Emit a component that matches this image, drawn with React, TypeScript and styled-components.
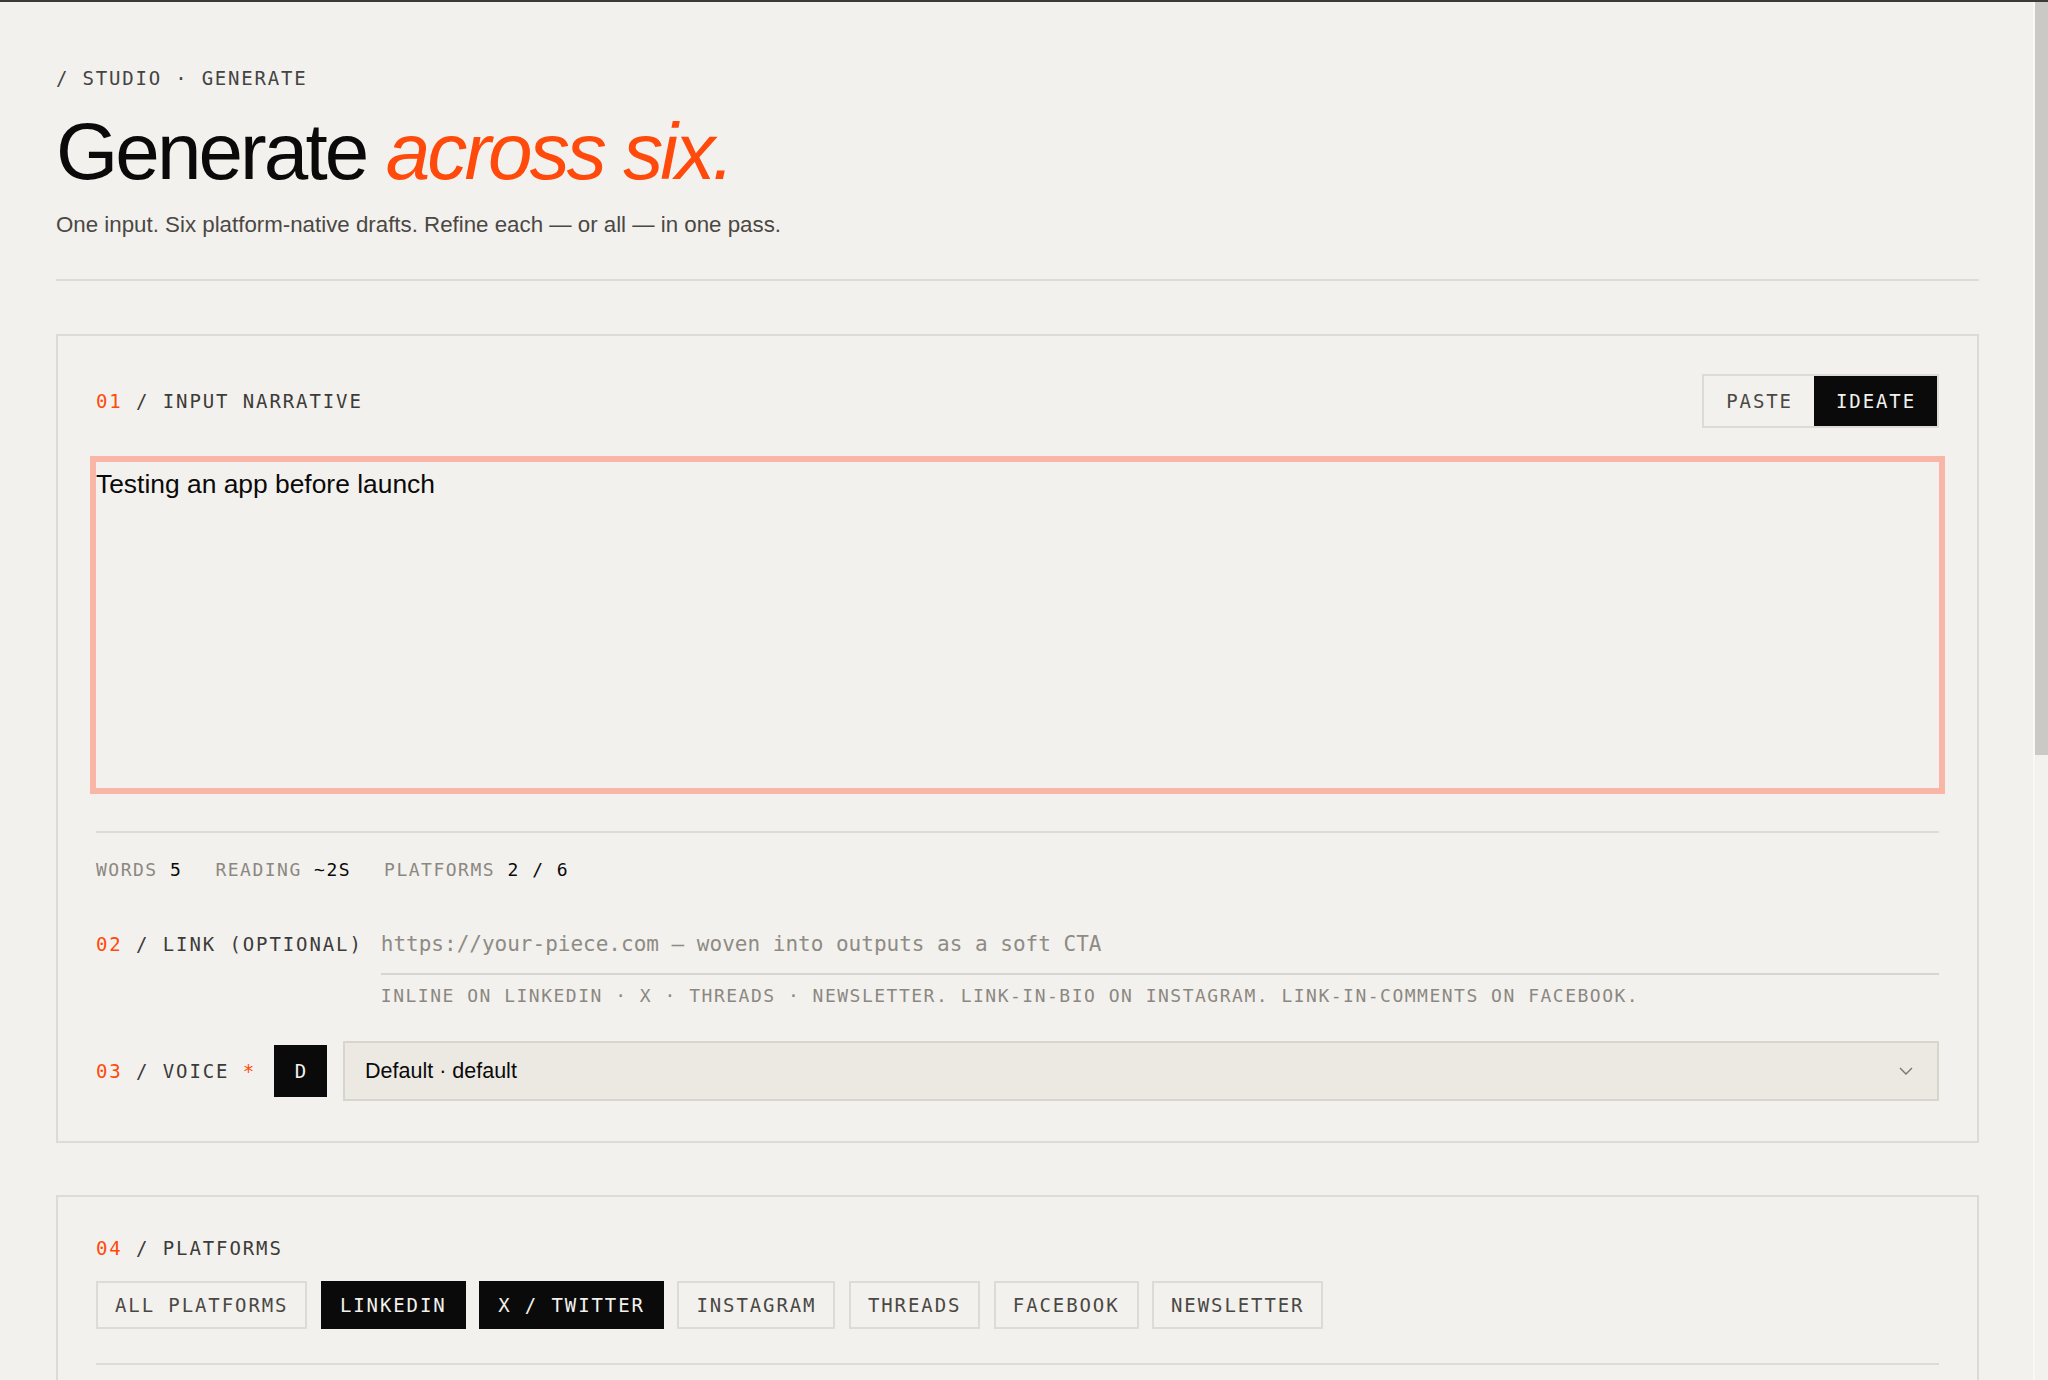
import React from "react";
import styled, { createGlobalStyle } from "styled-components";

const MONO = `"DejaVu Sans Mono", "Liberation Mono", monospace`;
const SANS = `"Liberation Sans", Arial, sans-serif`;
const ORANGE = "#ff4a0c";
const LINE = "#dedbd6";

const Global = createGlobalStyle`
  html, body { margin: 0; padding: 0; background: #f3f1ed; overflow: hidden; }
  body { border-top: 2px solid #3a3a3a; font-family: ${SANS}; color: #0a0a0a; }
  * { box-sizing: border-box; }
`;

const Shell = styled.div`
  display: flex;
  align-items: flex-start;
  height: calc(100vh - 2px);
`;

const Rail = styled.div`
  flex: 0 0 13px;
  width: 13px;
  align-self: stretch;
  box-shadow: -2px 0 0 #f9f8f5;
`;

const Thumb = styled.div`
  height: 753px;
  background: #cbc9c5;
`;

const Page = styled.main`
  flex: 1;
  min-width: 0;
  padding: 64px 56px 64px;
`;

const Crumb = styled.div`
  font-family: ${MONO};
  font-size: 19px;
  letter-spacing: 1.8px;
  line-height: 24px;
  color: #444;
  text-transform: uppercase;
`;

const Title = styled.h1`
  margin: 22px 0 0;
  font-family: ${SANS};
  font-weight: 400;
  font-size: 80px;
  line-height: 80px;
  letter-spacing: -2.9px;
  color: #0a0a0a;
`;

const Accent = styled.em`
  color: ${ORANGE};
  font-style: italic;
`;

const Lede = styled.p`
  margin: 18px 0 0;
  font-size: 22.3px;
  line-height: 30px;
  color: #4a4844;
`;

const Rule = styled.hr<{ $gap?: number }>`
  border: 0;
  height: 2px;
  background: ${LINE};
  margin: ${(p) => p.$gap ?? 0}px 0 0;
`;

const Card = styled.section<{ $top: number }>`
  margin-top: ${(p) => p.$top}px;
  border: 2px solid ${LINE};
  padding: 38px 38px 40px;
`;

const HeaderRow = styled.div`
  display: flex;
  align-items: center;
  justify-content: space-between;
  height: 54px;
`;

const Label = styled.div`
  font-family: ${MONO};
  font-size: 19px;
  letter-spacing: 1.9px;
  line-height: 26px;
  color: #3c3b39;
  text-transform: uppercase;
  white-space: nowrap;
`;

const Num = styled.span`
  color: ${ORANGE};
`;

const Segmented = styled.div`
  display: flex;
  border: 2px solid ${LINE};
  height: 54px;
`;

const SegButton = styled.button<{ $active?: boolean }>`
  font-family: ${MONO};
  font-size: 19px;
  letter-spacing: 1.9px;
  padding: 0 21px 0 22px;
  border: 0;
  background: ${(p) => (p.$active ? "#0a0a0a" : "transparent")};
  color: ${(p) => (p.$active ? "#f3f1ed" : "#4a4844")};
  text-transform: uppercase;
`;

const TextArea = styled.textarea`
  display: block;
  width: 100%;
  height: 326px;
  margin-top: 34px;
  padding: 3px 0 0;
  border: 0;
  background: transparent;
  outline: 6px solid #f9b5a5;
  resize: none;
  font-family: ${SANS};
  font-size: 26.4px;
  line-height: 38px;
  color: #0a0a0a;
`;

const Stats = styled.div`
  display: flex;
  gap: 33px;
  margin-top: 25px;
  font-family: ${MONO};
  font-size: 18px;
  letter-spacing: 1.5px;
  line-height: 24px;
  text-transform: uppercase;
`;

const Stat = styled.span`
  color: #8b8882;
  & > b {
    font-weight: 400;
    color: #0a0a0a;
  }
`;

const LinkRow = styled.div`
  display: grid;
  grid-template-columns: auto 1fr;
  column-gap: 18px;
  margin-top: 38px;
  align-items: start;
`;

const LinkLabel = styled(Label)`
  margin-top: 11px;
`;

const Field = styled.div`
  display: flex;
  flex-direction: column;
`;

const LinkInput = styled.input`
  height: 55px;
  padding: 0 0 6px;
  border: 0;
  border-bottom: 2px solid #d8d5d0;
  background: transparent;
  font-family: ${MONO};
  font-size: 21px;
  color: #0a0a0a;
  outline: none;
  &::placeholder {
    color: #8e8b85;
  }
`;

const Help = styled.div`
  margin-top: 9px;
  font-family: ${MONO};
  font-size: 18px;
  letter-spacing: 1.5px;
  line-height: 24px;
  color: #8b8882;
  text-transform: uppercase;
  white-space: nowrap;
`;

const VoiceRow = styled.div`
  display: flex;
  align-items: center;
  gap: 16px;
  margin-top: 33px;
  height: 60px;
`;

const Badge = styled.div`
  width: 53px;
  height: 52px;
  display: flex;
  align-items: center;
  justify-content: center;
  background: #0a0a0a;
  color: #f3f1ed;
  font-family: ${MONO};
  font-size: 19px;
  margin-left: 2px;
`;

const Select = styled.div`
  flex: 1;
  height: 60px;
  display: flex;
  align-items: center;
  justify-content: space-between;
  padding: 0 24px 0 20px;
  background: #ece9e3;
  border: 2px solid #d8d5cf;
  font-family: ${SANS};
  font-size: 21.5px;
  color: #0a0a0a;
`;

const Chips = styled.div`
  display: flex;
  gap: 13.5px;
  margin-top: 20px;
`;

const Chip = styled.button<{ $on?: boolean }>`
  height: 48px;
  padding: 0 17px;
  border: 2px solid ${(p) => (p.$on ? "#0a0a0a" : LINE)};
  background: ${(p) => (p.$on ? "#0a0a0a" : "transparent")};
  color: ${(p) => (p.$on ? "#f3f1ed" : "#4a4844")};
  font-family: ${MONO};
  font-size: 19px;
  letter-spacing: 1.9px;
  text-transform: uppercase;
`;

const Chevron = () => (
  <svg width="14" height="8" viewBox="0 0 14 8" fill="none">
    <path d="M1 1l6 6 6-6" stroke="#77746f" strokeWidth="1.4" />
  </svg>
);

const platforms = [
  { name: "All platforms", on: false },
  { name: "LinkedIn", on: true },
  { name: "X / Twitter", on: true },
  { name: "Instagram", on: false },
  { name: "Threads", on: false },
  { name: "Facebook", on: false },
  { name: "Newsletter", on: false },
];

export default function App() {
  return (
    <>
      <Global />
      <Shell>
        <Page>
          <Crumb>/ Studio · Generate</Crumb>
          <Title>
            Generate <Accent>across six.</Accent>
          </Title>
          <Lede>One input. Six platform-native drafts. Refine each — or all — in one pass.</Lede>
          <Rule $gap={39} />

          <Card $top={53}>
            <HeaderRow>
              <Label>
                <Num>01</Num> / Input narrative
              </Label>
              <Segmented>
                <SegButton>Paste</SegButton>
                <SegButton $active>Ideate</SegButton>
              </Segmented>
            </HeaderRow>
            <TextArea defaultValue="Testing an app before launch" />
            <Rule $gap={43} />
            <Stats>
              <Stat>
                Words <b>5</b>
              </Stat>
              <Stat>
                Reading <b>~2s</b>
              </Stat>
              <Stat>
                Platforms <b>2 / 6</b>
              </Stat>
            </Stats>
            <LinkRow>
              <LinkLabel>
                <Num>02</Num> / Link (optional)
              </LinkLabel>
              <Field>
                <LinkInput placeholder="https://your-piece.com — woven into outputs as a soft CTA" />
                <Help>
                  Inline on LinkedIn · X · Threads · Newsletter. Link-in-bio on Instagram. Link-in-comments on Facebook.
                </Help>
              </Field>
            </LinkRow>
            <VoiceRow>
              <Label>
                <Num>03</Num> / Voice <Num>*</Num>
              </Label>
              <Badge>D</Badge>
              <Select>
                <span>Default · default</span>
                <Chevron />
              </Select>
            </VoiceRow>
          </Card>

          <Card $top={52}>
            <Label>
              <Num>04</Num> / Platforms
            </Label>
            <Chips>
              {platforms.map((p) => (
                <Chip key={p.name} $on={p.on}>
                  {p.name}
                </Chip>
              ))}
            </Chips>
            <Rule $gap={34} />
          </Card>
        </Page>
        <Rail>
          <Thumb />
        </Rail>
      </Shell>
    </>
  );
}
